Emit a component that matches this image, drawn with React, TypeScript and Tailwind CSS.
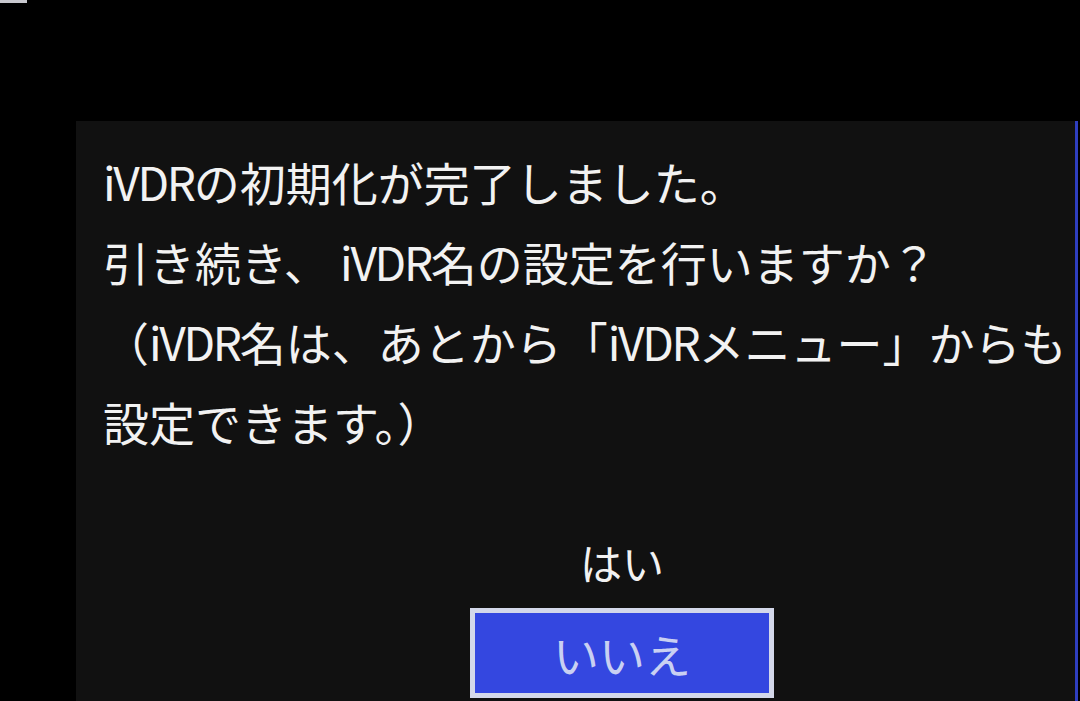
import React from 'react';

// "iVDR" runs a little tighter than the surrounding kana on the set's font
const V = () => <span className="tracking-[-0.05em]">iVDR</span>;

const lines: React.ReactNode[] = [
  <><V />の初期化が完了しました。</>,
  <>引き続き、 <V />名の設定を行いますか？</>,
  <>（<V />名は、あとから「<V />メニュー」からも</>,
  <>設定できます。）</>,
];

export default function App() {
  return (
    <div className="relative h-[701px] w-[1080px] overflow-hidden bg-black">
      {/* stray highlight at the very top of the screen */}
      <div className="absolute left-0 top-0 h-[3px] w-[27px] bg-[#c9c9cf]" />

      <div className="flex h-full pt-[121px] pl-[76px] pr-[2px]">
        <div
          className="flex-1 overflow-hidden border-r-[3px] border-[#2f3fc0] bg-[#111111] pt-[20px] pl-[27px] text-[#f2f2f2]"
          style={{ fontFamily: '"Noto Sans CJK JP", "Noto Sans", sans-serif' }}
        >
          {lines.map((l, i) => (
            <div key={i} className="h-[80px] whitespace-nowrap text-[46px] leading-[80px]">
              {l}
            </div>
          ))}

          <div className="ml-[367px] mt-[61px] flex w-[304px] flex-col items-center">
            <div className="h-[80px] text-[42px] leading-[80px]">はい</div>
            <div className="mt-[6px] flex h-[90px] w-full items-center justify-center border-[5px] border-[#d4d8ea] bg-[#3447e0] text-[46px] text-[#c9d0f2]">
              いいえ
            </div>
          </div>
        </div>
      </div>
    </div>
  );
}
